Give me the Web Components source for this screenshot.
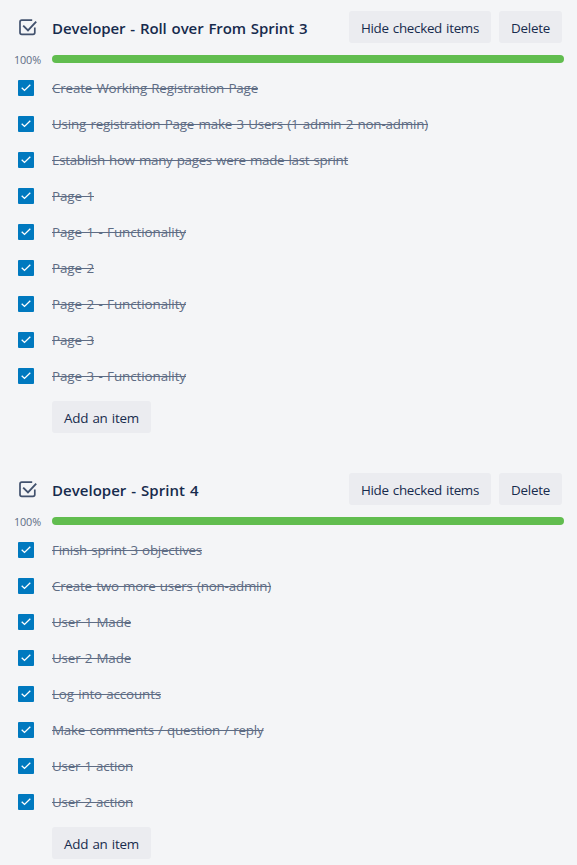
<!DOCTYPE html>
<html lang="en">
<head>
<meta charset="utf-8">
<title>Checklists</title>
<style>
html { background: #f4f5f7; }
body { margin: 0; height: 865px; overflow: hidden; background: #f4f5f7; color: #172b4d; font: 13.4px/20px "Segoe UI", "Open Sans", "Noto Sans", sans-serif; }
</style>
</head>
<body>
<check-list heading="Developer - Roll over From Sprint 3" heading-width="255.500">
  <check-item width="206">Create Working Registration Page</check-item>
  <check-item width="376">Using registration Page make 3 Users (1 admin 2 non-admin)</check-item>
  <check-item width="296">Establish how many pages were made last sprint</check-item>
  <check-item width="42">Page 1</check-item>
  <check-item width="134">Page 1 - Functionality</check-item>
  <check-item width="42">Page 2</check-item>
  <check-item width="134">Page 2 - Functionality</check-item>
  <check-item width="42">Page 3</check-item>
  <check-item width="134">Page 3 - Functionality</check-item>
</check-list>
<check-list heading="Developer - Sprint 4" heading-width="146.500">
  <check-item width="150">Finish sprint 3 objectives</check-item>
  <check-item width="219">Create two more users (non-admin)</check-item>
  <check-item width="79">User 1 Made</check-item>
  <check-item width="79">User 2 Made</check-item>
  <check-item width="109">Log into accounts</check-item>
  <check-item width="211.500">Make comments / question / reply</check-item>
  <check-item width="81">User 1 action</check-item>
  <check-item width="81">User 2 action</check-item>
</check-list>
<script>
// Text run whose tracking is adjusted so that it occupies a given width.
class FitText extends HTMLElement {
  connectedCallback() {
    if (this.shadowRoot) return;
    const text = this.getAttribute('text');
    this.attachShadow({ mode: 'open' }).innerHTML =
      '<style>:host{display:inline-block;white-space:pre}span{display:inline-block;word-spacing:1px;text-decoration:var(--line,none);text-decoration-thickness:1px}</style><span></span>';
    const span = this.shadowRoot.querySelector('span');
    span.textContent = text;
    const natural = span.getBoundingClientRect().width;
    const target = parseFloat(this.getAttribute('width'));
    span.style.letterSpacing = ((target - natural) / text.length).toFixed(4) + 'px';
  }
}
customElements.define('fit-text', FitText);

class SoftButton extends HTMLElement {
  connectedCallback() {
    if (this.shadowRoot) return;
    this.attachShadow({ mode: 'open' }).innerHTML = `<style>
      :host{display:block}
      button{display:block;box-sizing:border-box;height:32px;border:0;border-radius:3px;padding:2px 12px 0;margin:0;background:#ebecf0;color:#172b4d;font:inherit;line-height:20px}
    </style><button type="button"><fit-text text="${this.getAttribute('label')}" width="${this.getAttribute('width')}"></fit-text></button>`;
  }
}
customElements.define('soft-button', SoftButton);

class ProgressRow extends HTMLElement {
  connectedCallback() {
    if (this.shadowRoot) return;
    this.attachShadow({ mode: 'open' }).innerHTML = `<style>
      :host{display:flex;align-items:center;height:8px;padding:0 13px 0 14px}
      .pct{width:38px;font-size:10.800px;line-height:12px;color:#5e6c84;padding-top:2px}
      .track{flex:1;height:8px;border-radius:4px;background:#dfe1e6;overflow:hidden}
      .fill{width:100%;height:100%;background:#61bd4f}
    </style><div class="pct"><fit-text text="100%" width="27"></fit-text></div><div class="track"><div class="fill"></div></div>`;
  }
}
customElements.define('progress-row', ProgressRow);

class CheckItem extends HTMLElement {
  connectedCallback() {
    if (this.shadowRoot) return;
    this.attachShadow({ mode: 'open' }).innerHTML = `<style>
      :host{display:flex;align-items:center;gap:18px;height:36px;padding-left:18px;--line:line-through;color:#5e6c84}
      .box{width:16px;height:16px;border-radius:1px;background:#0079bf}
      svg{display:block}
    </style><div class="box"><svg width="16" height="16" viewBox="0 0 16 16" fill="none"><path d="M3.7 7.700 6.500 10.400 12.300 4.800" stroke="#fff" stroke-width="1.35"/></svg></div>
    <fit-text width="${this.getAttribute('width')}" text="${this.textContent.trim()}"></fit-text>`;
  }
}
customElements.define('check-item', CheckItem);

class CheckList extends HTMLElement {
  connectedCallback() {
    if (this.shadowRoot) return;
    this.attachShadow({ mode: 'open' }).innerHTML = `<style>
      :host{display:block;padding-top:11px;margin-bottom:29px}
      header{display:flex;align-items:center;height:32px;padding:0 15px 0 18px;margin-bottom:12px}
      header svg{flex:none;margin:0 13px 0 0}
      h3{margin:0;padding-top:2px;flex:1;font-size:15px;font-weight:600;line-height:20px}
      .actions{display:flex;gap:8px}
      .items{padding-top:7px}
      .add{display:flex;margin:7px 0 0 52px}
    </style>
    <header>
      <svg width="21" height="20" viewBox="0 0 21 20" fill="none" stroke="#42526e" stroke-width="1.7"><path d="M14.200 3.200H3.800Q2 3.200 2 5V15.600Q2 17.400 3.800 17.400H15Q16.800 17.400 16.800 15.600V10.400"/><path d="M5.200 8.600 10 13.400 18.200 4.700" stroke-width="1.900"/></svg>
      <h3><fit-text text="${this.getAttribute('heading')}" width="${this.getAttribute('heading-width')}"></fit-text></h3>
      <div class="actions"><soft-button label="Hide checked items" width="118"></soft-button><soft-button label="Delete" width="39"></soft-button></div>
    </header>
    <progress-row></progress-row>
    <div class="items"><slot></slot></div>
    <div class="add"><soft-button label="Add an item" width="75"></soft-button></div>`;
  }
}
customElements.define('check-list', CheckList);
</script>
</body>
</html>
